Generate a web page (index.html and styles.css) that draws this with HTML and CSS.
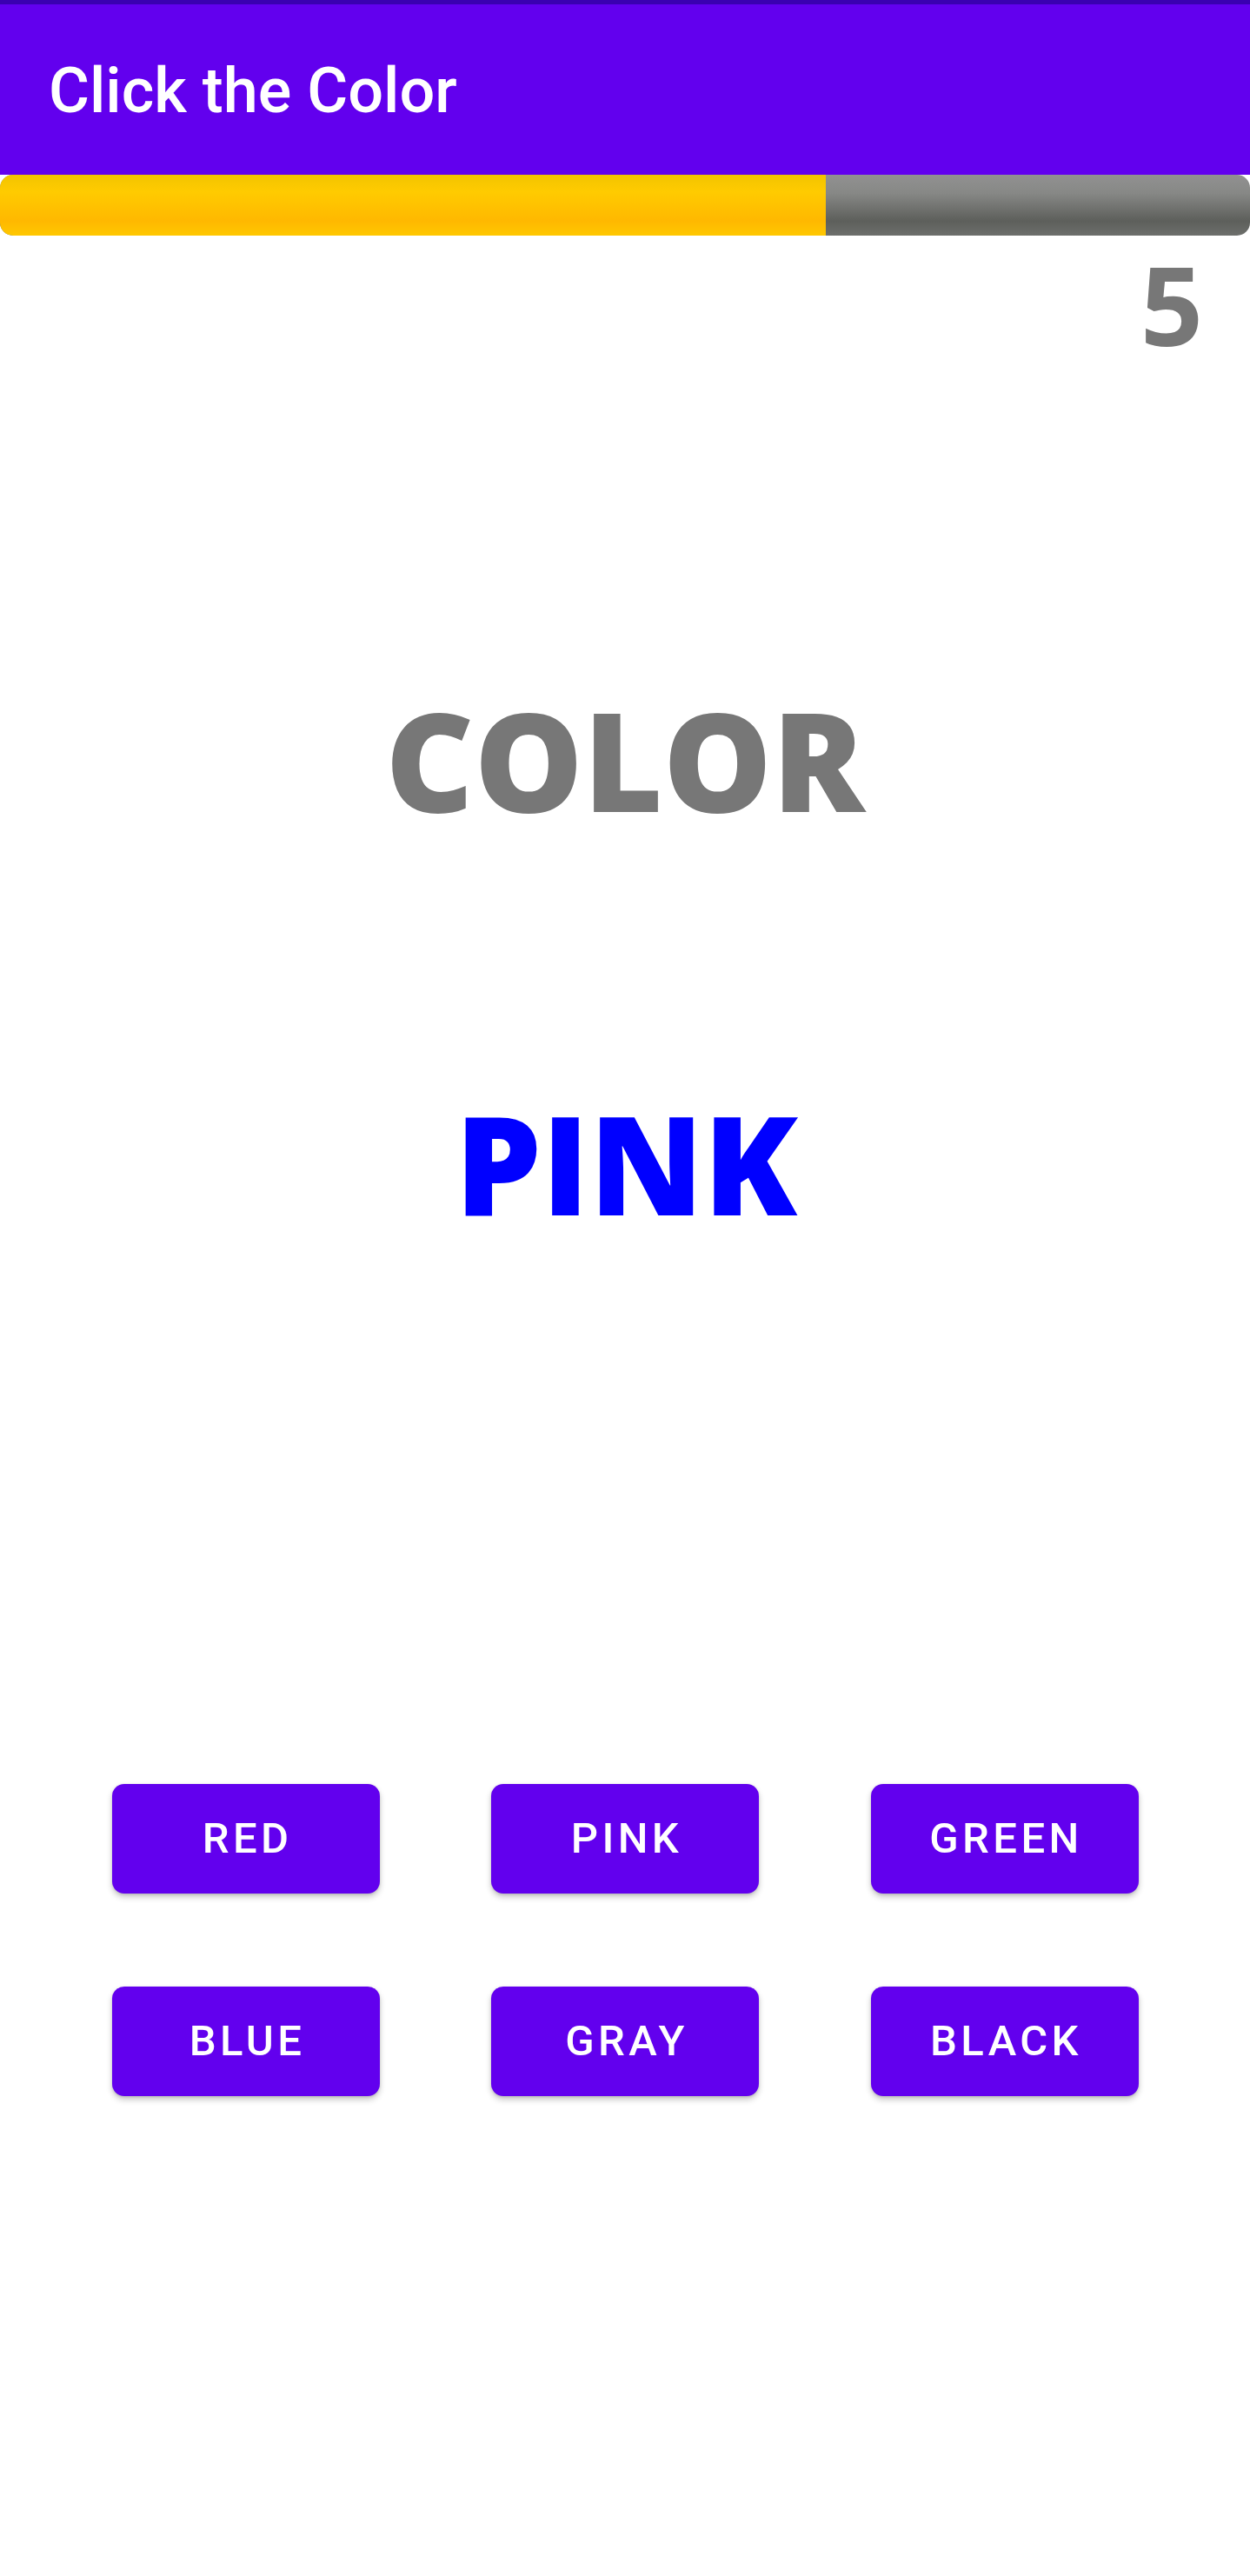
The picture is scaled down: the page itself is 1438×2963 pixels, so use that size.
FILE: index.html
```html
<!DOCTYPE html>
<html lang="en">
<head>
<meta charset="utf-8">
<title>Click the Color</title>
<link rel="stylesheet" href="styles.css">
</head>
<body>
<div class="screen">
  <div class="status-strip"></div>
  <header class="toolbar">
    <h1 class="toolbar-title">Click the Color</h1>
  </header>
  <div class="progress">
    <div class="progress-fill" style="width:66.06%"></div>
  </div>
  <div class="score">5</div>
  <div class="word word-label">COLOR</div>
  <div class="word word-target">PINK</div>
  <div class="choices">
    <button class="choice">RED</button>
    <button class="choice">PINK</button>
    <button class="choice">GREEN</button>
    <button class="choice">BLUE</button>
    <button class="choice">GRAY</button>
    <button class="choice">BLACK</button>
  </div>
</div>
</body>
</html>
```
FILE: styles.css
```css
html, body {
  margin: 0;
  padding: 0;
  background: #ffffff;
}

.screen {
  width: 1438px;
  min-height: 2963px;
  display: flex;
  flex-direction: column;
  background: #ffffff;
}

.status-strip {
  height: 5px;
  background: #3a00b0;
}

.toolbar {
  height: 196px;
  background: #6200ee;
  display: flex;
  align-items: center;
  padding-left: 56px;
}

.toolbar-title {
  margin: 0;
  font-family: Roboto, "Liberation Sans", sans-serif;
  font-weight: 500;
  font-size: 72px;
  line-height: 1;
  color: #ffffff;
  padding-top: 3px;
}

.progress {
  height: 70px;
  border-radius: 15px;
  overflow: hidden;
  display: flex;
  background: linear-gradient(to bottom, #919191 0%, #878886 30%, #5d5f5b 76%, #6d6f6c 100%);
}

.progress-fill {
  height: 100%;
  background: linear-gradient(to bottom, #f2c400 0%, #ffcb00 28%, #ffb800 76%, #ffc800 100%);
}

.score {
  margin-top: 15px;
  height: 126px;
  padding-right: 54px;
  text-align: right;
  font-family: "Open Sans", "DejaVu Sans", sans-serif;
  font-weight: 700;
  font-size: 126px;
  line-height: 1;
  color: #777777;
}

.word {
  font-family: "Open Sans", "DejaVu Sans", sans-serif;
  font-weight: 800;
  font-size: 157.5px;
  line-height: 1;
  height: 157.5px;
  text-align: center;
}

.word-label {
  margin-top: 383px;
  color: #777777;
}

.word-target {
  margin-top: 306.5px;
  padding-left: 3px;
  color: #0000ff;
}

.choices {
  margin-top: 635px;
  display: grid;
  grid-template-columns: repeat(3, 308px);
  justify-content: space-evenly;
  row-gap: 107px;
}

.choice {
  height: 126px;
  width: 308px;
  border: none;
  border-radius: 14px;
  background: #6200ee;
  color: #ffffff;
  font-family: Roboto, "Liberation Sans", sans-serif;
  font-weight: 500;
  font-size: 49px;
  letter-spacing: 4.4px;
  text-transform: uppercase;
  padding: 0 0 0 4px;
  box-shadow: 0 4px 7px rgba(0, 0, 0, 0.22), 0 1px 3px rgba(0, 0, 0, 0.12);
}
```
